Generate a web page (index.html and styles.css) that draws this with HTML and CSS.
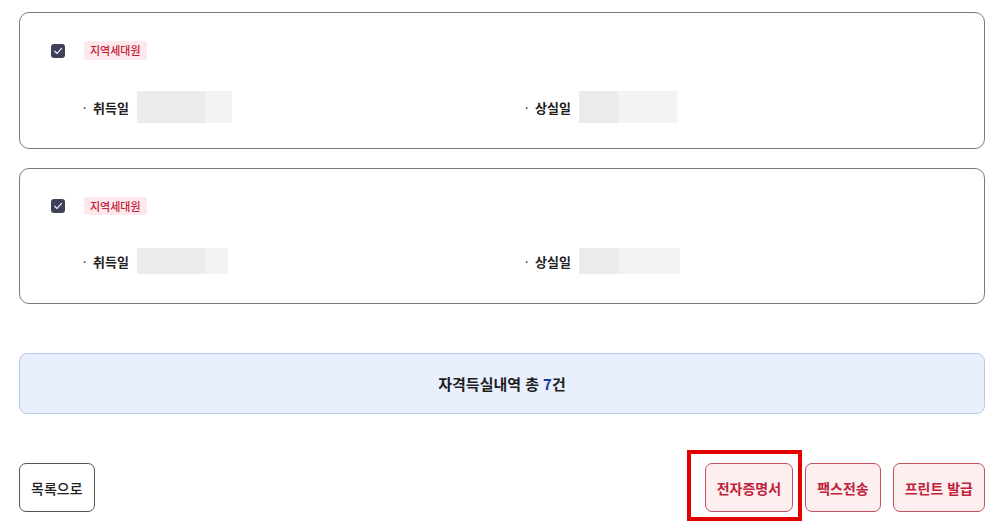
FILE: index.html
```html
<!DOCTYPE html>
<html lang="ko">
<head>
<meta charset="utf-8">
<link rel="stylesheet" href="styles.css">
</head>
<body>
<div class="page">
  <div class="card">
    <div class="head">
      <span class="check"><svg width="14" height="14" viewBox="0 0 14 14"><path d="M3.6 7.2 L6 9.5 L10.6 4.4" fill="none" stroke="#fff" stroke-width="1.1" stroke-linecap="round" stroke-linejoin="round"/></svg></span>
      <span class="badge">지역세대원</span>
    </div>
    <div class="info">
      <div class="field">
        <span class="dot">·</span><span class="label">취득일</span>
        <span class="value"><span class="seg a" style="width:69px"></span><span class="seg b" style="width:26px"></span></span>
      </div>
      <div class="field">
        <span class="dot">·</span><span class="label">상실일</span>
        <span class="value"><span class="seg a" style="width:39px"></span><span class="seg b" style="width:59px"></span></span>
      </div>
    </div>
  </div>

  <div class="card card-b">
    <div class="head">
      <span class="check"><svg width="14" height="14" viewBox="0 0 14 14"><path d="M3.6 7.2 L6 9.5 L10.6 4.4" fill="none" stroke="#fff" stroke-width="1.1" stroke-linecap="round" stroke-linejoin="round"/></svg></span>
      <span class="badge">지역세대원</span>
    </div>
    <div class="info">
      <div class="field">
        <span class="dot">·</span><span class="label">취득일</span>
        <span class="value"><span class="seg a" style="width:69px"></span><span class="seg b" style="width:22px"></span></span>
      </div>
      <div class="field">
        <span class="dot">·</span><span class="label">상실일</span>
        <span class="value"><span class="seg a" style="width:39px"></span><span class="seg b" style="width:62px"></span></span>
      </div>
    </div>
  </div>

  <div class="summary">자격득실내역 총 <em>7</em>건</div>

  <div class="actions">
    <button class="btn btn-plain">목록으로</button>
    <div class="right">
      <span class="hl-wrap"><button class="btn btn-red">전자증명서</button><span class="highlight"></span></span>
      <button class="btn btn-red">팩스전송</button>
      <button class="btn btn-red">프린트 발급</button>
    </div>
  </div>
</div>
</body>
</html>
```

FILE: styles.css
```css
* { box-sizing: border-box; }
html, body { margin: 0; padding: 0; background: #fff; }
body {
  font-family: "Noto Sans CJK KR", "Noto Sans", sans-serif;
  color: #222;
}
.page {
  width: 966px;
  margin-left: 19px;
  padding-top: 12px;
  padding-bottom: 17px;
}
.card {
  border: 1px solid #7b7b7b;
  border-radius: 10px;
  padding: 28px 0 24px 31px;
  height: 137px;
}
.card-b {
  margin-top: 19px;
  height: 136px;
}
.head {
  display: flex;
  align-items: center;
  height: 19px;
}
.card-b .head { height: 18px; }
.check {
  width: 14px;
  height: 14px;
  border-radius: 3px;
  background: #3f4159;
  display: flex;
}
.badge {
  margin-left: 19px;
  height: 19px;
  line-height: 19px;
  padding: 0 6px;
  background: #fde9ec;
  color: #c42238;
  font-size: 11px;
  font-weight: 500;
  border-radius: 2px;
}
.card-b .badge { height: 18px; line-height: 18px; }
.info {
  display: grid;
  grid-template-columns: 442px 1fr;
  margin-top: 31px;
  padding-left: 32px;
}
.card-b .info { margin-top: 33px; }
.field {
  display: flex;
  align-items: center;
  height: 32px;
}
.card-b .field { height: 26px; }
.dot {
  font-size: 12px;
  width: 10px;
  color: #333;
}
.label {
  font-size: 13px;
  font-weight: 700;
  color: #222;
  width: 44px;
}
.value {
  display: flex;
  height: 100%;
}
.seg { display: block; height: 100%; }
.seg.a { background: #ebebeb; }
.seg.b { background: #f3f3f3; }
.summary {
  margin-top: 49px;
  height: 61px;
  border: 1px solid #b9c9ea;
  border-radius: 8px;
  background: #e9effd;
  display: flex;
  align-items: center;
  justify-content: center;
  font-size: 15px;
  font-weight: 700;
  color: #1d1d1d;
}
.summary em {
  font-style: normal;
  color: #1c3ca0;
  margin-left: 4px;
}
.actions {
  margin-top: 49px;
  display: flex;
  justify-content: space-between;
}
.right {
  display: flex;
  gap: 12px;
}
.btn {
  font-family: inherit;
  height: 49px;
  padding: 0 11px;
  font-size: 14px;
  border-radius: 7px;
  cursor: pointer;
}
.btn-plain {
  background: #fff;
  border: 1px solid #555;
  color: #222;
  font-weight: 500;
}
.btn-red {
  background: #fdeef0;
  border: 1px solid #c2505f;
  color: #c0233a;
  font-weight: 700;
}
.hl-wrap {
  position: relative;
  display: flex;
}
.highlight {
  position: absolute;
  left: -18px;
  right: -9px;
  top: -13px;
  bottom: -9px;
  border: 4px solid #e30000;
  pointer-events: none;
}
```
